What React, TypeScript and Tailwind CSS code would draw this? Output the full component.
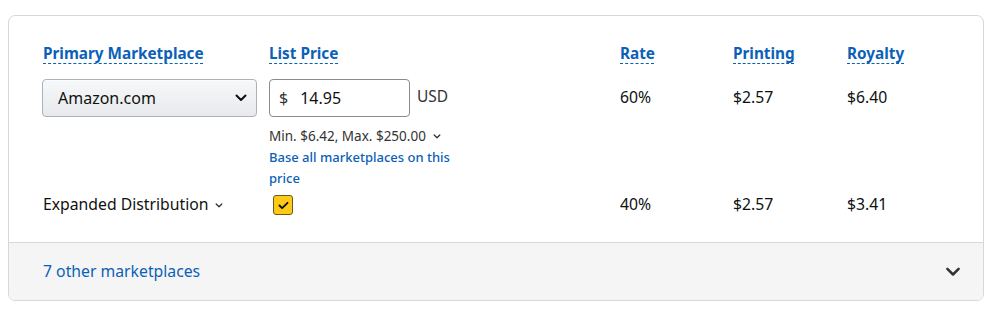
import React from "react";

const font = { fontFamily: '"Noto Sans", "Liberation Sans", Arial, sans-serif' };

function Header({ children }: { children: React.ReactNode }) {
  return (
    <span className="text-[15.3px] font-bold leading-6 text-[#0a61b7] underline decoration-dashed decoration-1 underline-offset-[4px]">
      {children}
    </span>
  );
}

function Chevron({ className }: { className?: string }) {
  return (
    <svg viewBox="0 0 12 8" className={className} fill="none" stroke="currentColor" strokeWidth="2" strokeLinecap="round" strokeLinejoin="round">
      <path d="M1.5 1.5 6 6l4.5-4.5" />
    </svg>
  );
}

export default function App() {
  return (
    <div className="bg-white w-[1000px] h-[322px] pt-[15px] pl-[8px]" style={font}>
      <div className="w-[976px] h-[286px] border border-[#d5d9d9] rounded-[7px] overflow-hidden flex flex-col">
        <div className="flex-1 pl-[34px] pt-[25px] text-[#0f1111]">
          <div className="grid grid-cols-[226px_351px_113px_114px_1fr]">
            <div><Header>Primary Marketplace</Header></div>
            <div><Header>List Price</Header></div>
            <div><Header>Rate</Header></div>
            <div><Header>Printing</Header></div>
            <div><Header>Royalty</Header></div>

            <div className="mt-[14px]">
              <div className="w-[215px] h-[38px] -ml-px border border-[#adb1b8] rounded-[4px] bg-gradient-to-b from-[#f7f8fa] to-[#e7e9ec] flex items-center justify-between pl-[15px] pr-[9px] shadow-[0_1px_0_rgba(255,255,255,0.6)_inset]">
                <span className="text-[16px]">Amazon.com</span>
                <Chevron className="w-[12px] h-[8px] text-[#0f1111]" />
              </div>
            </div>
            <div className="mt-[14px]">
              <div className="flex items-center">
                <div className="w-[141px] h-[38px] border border-[#888c8c] rounded-[4px] flex items-center pl-[9px]">
                  <span className="text-[16px] text-[#333]">$</span>
                  <span className="text-[16px] ml-[12px]">14.95</span>
                </div>
                <span className="ml-[7px] text-[15.5px] text-[#333] -mt-[2px]">USD</span>
              </div>
              <div className="mt-[9px] text-[13.5px] leading-[21px] text-[#333] flex items-center">
                Min. $6.42, Max. $250.00
                <Chevron className="w-[8px] h-[5px] ml-[7px] text-[#333]" />
              </div>
              <div className="w-[200px] text-[13px] leading-[21px] text-[#0a61b7] font-medium">
                Base all marketplaces on this price
              </div>
            </div>
            <div className="mt-[14px] h-[38px] flex items-center text-[15.75px]">60%</div>
            <div className="mt-[14px] h-[38px] flex items-center text-[15.75px]">$2.57</div>
            <div className="mt-[14px] h-[38px] flex items-center text-[15.75px]">$6.40</div>

            <div className="h-[32px] flex items-center text-[15.75px]">
              Expanded Distribution
              <Chevron className="w-[8px] h-[5px] ml-[6px] text-[#333]" />
            </div>
            <div className="h-[32px] flex items-center">
              <div className="ml-[4px] w-[20px] h-[20px] rounded-[3px] bg-[#ffc917] border border-[#6b5a1a] flex items-center justify-center">
                <svg viewBox="0 0 12 10" className="w-[11px] h-[9px]" fill="none" stroke="#0f1111" strokeWidth="2" strokeLinecap="round" strokeLinejoin="round">
                  <path d="M1.5 5 4.5 8 10.5 2" />
                </svg>
              </div>
            </div>
            <div className="h-[32px] flex items-center text-[15.75px]">40%</div>
            <div className="h-[32px] flex items-center text-[15.75px]">$2.57</div>
            <div className="h-[32px] flex items-center text-[15.75px]">$3.41</div>
          </div>
        </div>
        <div className="h-[58px] border-t border-[#d5d9d9] bg-[#f5f5f5] flex items-center justify-between pl-[34px] pr-[22px]">
          <span className="text-[15.75px] text-[#0a61b7]">7 other marketplaces</span>
          <Chevron className="w-[16px] h-[10px] text-[#333]" />
        </div>
      </div>
    </div>
  );
}
